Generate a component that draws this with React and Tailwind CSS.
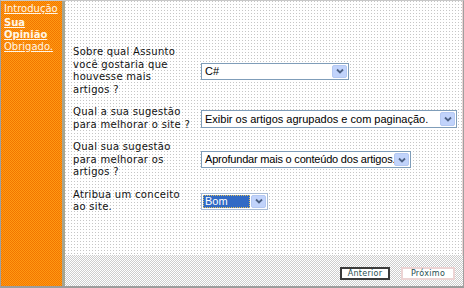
import React from "react";

function Arrow() {
  return (
    <div className="w-[15px] shrink-0 my-[1px] mr-[1px] rounded-[2px] bg-[#c1d3fb] border border-[#b4c8f2] flex items-center justify-center">
      <svg width="8" height="6" viewBox="0 0 8 6">
        <path d="M1 1.5 L4 4.5 L7 1.5" fill="none" stroke="#4d6185" strokeWidth="1.8" />
      </svg>
    </div>
  );
}

function Row({ label, children, className = "" }) {
  return (
    <div className={"flex items-center " + className}>
      <div className="w-[128px] shrink-0 whitespace-nowrap text-[10px] leading-[12.5px] tracking-[0.3px] text-[#111] font-['DejaVu_Sans',sans-serif]">
        {label}
      </div>
      {children}
    </div>
  );
}

export default function App() {
  const selText = "flex-1 min-w-0 pl-[3px] text-[11px] leading-[15px] text-black font-['Liberation_Sans',Arial,sans-serif] whitespace-nowrap overflow-hidden";
  return (
    <div className="w-[464px] h-[288px] flex border-l border-l-[#a0a0a0] border-r border-r-[#a0a0a0] border-t border-t-[#c8c8c8] border-b-2 border-b-[#9c9c9c] overflow-hidden">
      <aside className="w-[61px] shrink-0 bg-[#f88808] bg-[conic-gradient(#ff9a12_25%,#f27600_0_50%,#ff9a12_0_75%,#f27600_0)] bg-[length:2px_2px] pt-[2px] pl-[3px] pr-[1px] text-[10px] leading-[12px] text-[#fff6e6] font-['DejaVu_Sans',sans-serif]">
        <div className="underline mb-[2px]">Introdução</div>
        <div className="underline font-bold">Sua Opinião</div>
        <div className="underline">Obrigado.</div>
      </aside>
      <div className="w-[3px] shrink-0 bg-[#a7a58e]" />
      <main className="flex-1 flex flex-col">
        <div className="flex-1 bg-white bg-[conic-gradient(at_1px_1px,transparent_75%,#c6c6c6_0)] bg-[length:3px_3px] pl-[8px] pt-[45px] flex flex-col gap-[10px] border-r border-r-[#ead6d6]">
          <Row label={<>Sobre qual Assunto<br />você gostaria que<br />houvesse mais<br />artigos ?</>}>
            <div className="w-[148px] h-[17px] border border-[#7f9db9] bg-white flex">
              <div className={selText}>C#</div>
              <Arrow />
            </div>
          </Row>
          <Row label={<>Qual a sua sugestão<br />para melhorar o site ?</>}>
            <div className="w-[256px] h-[18px] border border-[#7f9db9] bg-white flex">
              <div className={selText + " leading-[16px]"}>Exibir os artigos agrupados e com paginação.</div>
              <Arrow />
            </div>
          </Row>
          <Row label={<>Qual sua sugestão<br />para melhorar os<br />artigos ?</>}>
            <div className="w-[210px] h-[17px] border border-[#7f9db9] bg-white flex">
              <div className={selText + " tracking-[-0.2px]"}>Aprofundar mais o conteúdo dos artigos.</div>
              <Arrow />
            </div>
          </Row>
          <Row label={<>Atribua um conceito<br />ao site.</>}>
            <div className="w-[67px] h-[17px] border border-[#a9bcd6] bg-white flex">
              <div className="flex-1 p-[1px] flex">
                <div className="flex-1 bg-[#316ac5] outline outline-1 outline-dotted outline-[#e0c060] -outline-offset-1 pl-[2px] text-[11px] leading-[13px] text-white font-['Liberation_Sans',Arial,sans-serif]">
                  Bom
                </div>
              </div>
              <Arrow />
            </div>
          </Row>
        </div>
        <div className="h-[31px] shrink-0 bg-[conic-gradient(#cdcdcd_25%,#ffffff_0_50%,#cdcdcd_0_75%,#ffffff_0)] bg-[length:2px_2px] flex justify-end items-start pt-[12px] pr-[8px] gap-[11px] font-['DejaVu_Sans',sans-serif] text-[8px] tracking-[0.3px] text-[#1f4f4f]">
          <div className="w-[50px] h-[13px] border-2 border-[#3a3a3a] bg-white flex items-center justify-center leading-[9px]">
            Anterior
          </div>
          <div className="w-[54px] h-[13px] border-2 border-[#ecd4d4] bg-white flex items-center justify-center leading-[9px]">
            Próximo
          </div>
        </div>
      </main>
    </div>
  );
}
